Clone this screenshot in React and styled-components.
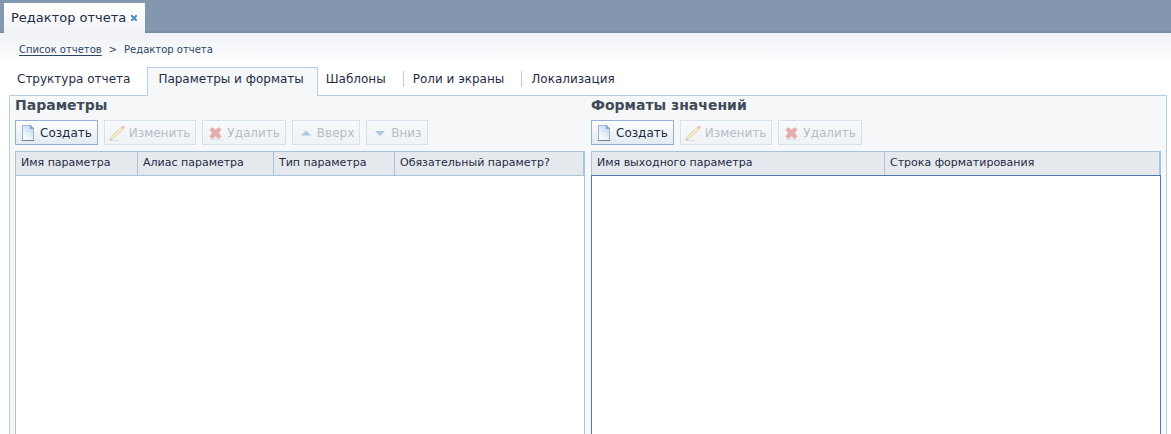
import React from "react";
import styled, { createGlobalStyle } from "styled-components";

const GlobalStyle = createGlobalStyle`
  * { box-sizing: border-box; }
  body {
    margin: 0;
    background: #fff;
    color: #1f3350;
    font-family: Verdana, "DejaVu Sans", sans-serif;
    font-size: 12px;
  }
`;

const Page = styled.div`
  display: flex;
  flex-direction: column;
  min-height: 100vh;
`;

const TopBar = styled.header`
  display: flex;
  align-items: flex-end;
  height: 33px;
  padding-left: 4px;
  background: linear-gradient(#8497af 0, #8497af 30px, #7488a3 33px);
`;

const WindowTab = styled.div`
  display: flex;
  align-items: center;
  gap: 4px;
  height: 30px;
  padding: 0 7px 0 7px;
  background: linear-gradient(#fff, #f0f2f6);
  color: #1f2d44;
`;

const TabLabel = styled.span`
  font-size: 13px;
  line-height: 16px;
  white-space: nowrap;
`;

const CloseButton = styled.button`
  display: flex;
  padding: 0;
  border: 0;
  background: none;
`;

const Main = styled.main`
  display: flex;
  flex: 1;
  flex-direction: column;
  padding: 0 4px 0 9px;
  background: linear-gradient(#eff1f6, #fff 32px);
`;

const Breadcrumbs = styled.nav`
  display: flex;
  gap: 7px;
  padding: 9px 10px 0;
  height: 34px;
  font-size: 10px;
  line-height: 16px;
  color: #2b4565;

  a {
    color: #2b4565;
    text-underline-offset: 2px;
  }
`;

const Tabs = styled.div`
  display: flex;
  align-items: flex-start;
  height: 28px;
`;

const Tab = styled.button`
  height: 16px;
  margin-top: 4px;
  padding: 0 17px 0 8px;
  border: 0;
  background: none;
  color: #1f2d44;
  font: 12px/16px Verdana, "DejaVu Sans", sans-serif;
  white-space: nowrap;

  ${(p) => p.$divided && `
    padding-left: 9px;
    border-left: 1px solid #b5d0e3;
  `}
  ${(p) => p.$active && `
    position: relative;
    height: 29px;
    margin-top: 0;
    padding: 0 13px 6px 10px;
    border: 1px solid #b5d0e3;
    border-bottom: 0;
    background: #f5f7f9;
  `}
`;

const Panel = styled.section`
  display: grid;
  flex: 1;
  grid-template-columns: 1fr 1fr;
  gap: 6px;
  padding: 0 5px;
  border: 1px solid #b5d0e3;
  border-bottom: 0;
  background: #f5f7f9;
`;

const Column = styled.div`
  display: flex;
  flex-direction: column;
  min-width: 0;
`;

const Title = styled.h2`
  margin: 0 0 6px;
  color: #414b57;
  font-size: 14px;
  line-height: 18px;
`;

const Toolbar = styled.div`
  display: flex;
  gap: 6px;
  margin-bottom: 6px;
`;

const ToolButton = styled.button`
  display: flex;
  align-items: center;
  gap: 4px;
  height: 25px;
  padding: 0 5px 0 4px;
  border: 1px solid #8fafd4;
  background: linear-gradient(#fdfeff, #e3eaf1);
  color: #1f2d44;
  font: 12px/16px Verdana, "DejaVu Sans", sans-serif;
  white-space: nowrap;

  &:disabled {
    border-color: #d6e1ee;
    background: linear-gradient(#f7f9fb, #eff2f6);
    color: #b7bdc6;
  }
  &:disabled svg { opacity: 0.4; }
`;

const Grid = styled.div`
  display: flex;
  flex: 1;
  flex-direction: column;
`;

const HeaderTable = styled.table`
  width: 100%;
  border-collapse: separate;
  border-spacing: 0;
  table-layout: fixed;
  border: 1px solid #a8c4dd;
  border-width: 1px 1px 0;
`;

const HeaderCell = styled.th`
  width: ${(p) => p.$width || "auto"};
  height: 23px;
  padding: 0 5px 2px;
  border-right: 1px solid #a8c4dd;
  background: #e5e8ed;
  color: #1f2d44;
  font-size: 11px;
  font-weight: normal;
  line-height: 14px;
  text-align: left;
  white-space: nowrap;
`;

const GridBody = styled.div`
  flex: 1;
  border: 1px solid ${(p) => (p.$focused ? "#4c7aae" : "#a8c4dd")};
  border-bottom: 0;
  background: #fff;
`;

const CloseIcon = () => (
  <svg width="8" height="8" viewBox="0 0 8 8" aria-hidden="true">
    <path d="M1 1h2v1h2V1h2v2H6v2h1v2H5V6H3v1H1V5h1V3H1z" fill="#5b93c2" />
  </svg>
);

const PageIcon = () => (
  <svg width="16" height="16" viewBox="0 0 16 16" aria-hidden="true">
    <defs>
      <linearGradient id="sheet" x1="1" y1="0" x2="0.3" y2="1">
        <stop offset="0" stopColor="#b4d3ef" />
        <stop offset="0.5" stopColor="#dcebf8" />
        <stop offset="1" stopColor="#fff" />
      </linearGradient>
    </defs>
    <path d="M1 15.5h14" stroke="#c6cdd5" />
    <path d="M2.5.5h8l3 3v12h-11z" fill="url(#sheet)" stroke="#a3b3c5" />
    <path d="M10.5.5v3h3z" fill="#8db4da" stroke="#6f9ac6" strokeWidth=".8" strokeLinejoin="round" />
    <path d="M2 15.5h12" stroke="#7b8086" />
  </svg>
);

const PencilIcon = () => (
  <svg width="16" height="16" viewBox="0 0 16 16" aria-hidden="true">
    <path d="M1 15.5h8" stroke="#bfc4ca" />
    <path d="M1 15l1.5-3.5L12 2.5l2 2L4.5 13.5z" fill="#f4d94c" stroke="#b29239" strokeWidth=".7" />
    <path d="M3.5 12.5L13 3.5" stroke="#fff080" strokeWidth=".8" />
    <path d="M1 15l1.5-3.5L4.5 13.5z" fill="#e8cfac" />
    <path d="M.7 15.4l.8-2.1 1.3 1.2z" fill="#45484c" />
    <path d="M12 2.5l1.3-1.3q1-.7 1.9.2t.2 1.8L14 4.5z" fill="#ee6b63" />
  </svg>
);

const DeleteIcon = () => (
  <svg width="16" height="16" viewBox="0 0 16 16" aria-hidden="true">
    <path d="M3 14.5h11" stroke="#c9c4c6" />
    <path
      d="M3 4.8L5.3 2.5 8.5 5.2 11.7 2.5 14 4.8 11.3 8 14 11.3 11.7 13.6 8.5 10.8 5.3 13.6 3 11.3 5.7 8z"
      fill="#dc4038"
      stroke="#d0423b"
      strokeLinejoin="round"
    />
  </svg>
);

const ArrowIcon = ({ down }) => (
  <svg width="16" height="16" viewBox="0 0 16 16" aria-hidden="true">
    <path d={down ? "M4 6h10L9 11z" : "M4 10.5h10l-5-5z"} fill="#4c83bd" />
  </svg>
);

const createAction = { label: "Создать", icon: <PageIcon /> };
const editAction = { label: "Изменить", icon: <PencilIcon />, disabled: true };
const deleteAction = { label: "Удалить", icon: <DeleteIcon />, disabled: true };
const upAction = { label: "Вверх", icon: <ArrowIcon />, disabled: true };
const downAction = { label: "Вниз", icon: <ArrowIcon down />, disabled: true };

const sections = [
  {
    title: "Параметры",
    actions: [createAction, editAction, deleteAction, upAction, downAction],
    columns: [
      { label: "Имя параметра", width: "122px" },
      { label: "Алиас параметра", width: "136px" },
      { label: "Тип параметра", width: "121px" },
      { label: "Обязательный параметр?" },
    ],
  },
  {
    title: "Форматы значений",
    focused: true,
    actions: [createAction, editAction, deleteAction],
    columns: [
      { label: "Имя выходного параметра", width: "293px" },
      { label: "Строка форматирования" },
    ],
  },
];

const GridSection = ({ title, actions, columns, focused }) => (
  <Column>
    <Title>{title}</Title>
    <Toolbar>
      {actions.map((a) => (
        <ToolButton key={a.label} type="button" disabled={a.disabled}>
          {a.icon}
          {a.label}
        </ToolButton>
      ))}
    </Toolbar>
    <Grid>
      <HeaderTable>
        <thead>
          <tr>
            {columns.map((c) => (
              <HeaderCell key={c.label} scope="col" $width={c.width}>
                {c.label}
              </HeaderCell>
            ))}
          </tr>
        </thead>
      </HeaderTable>
      <GridBody $focused={focused} />
    </Grid>
  </Column>
);

export default function App() {
  return (
    <Page>
      <GlobalStyle />
      <TopBar>
        <WindowTab>
          <TabLabel>Редактор отчета</TabLabel>
          <CloseButton type="button" aria-label="Закрыть">
            <CloseIcon />
          </CloseButton>
        </WindowTab>
      </TopBar>
      <Main>
        <Breadcrumbs>
          <a href="#reports">Список отчетов</a>
          <span>&gt;</span>
          <span>Редактор отчета</span>
        </Breadcrumbs>
        <Tabs role="tablist">
          <Tab type="button" role="tab">Структура отчета</Tab>
          <Tab type="button" role="tab" aria-selected="true" $active>Параметры и форматы</Tab>
          <Tab type="button" role="tab">Шаблоны</Tab>
          <Tab type="button" role="tab" $divided>Роли и экраны</Tab>
          <Tab type="button" role="tab" $divided>Локализация</Tab>
        </Tabs>
        <Panel>
          {sections.map((s) => (
            <GridSection key={s.title} {...s} />
          ))}
        </Panel>
      </Main>
    </Page>
  );
}
